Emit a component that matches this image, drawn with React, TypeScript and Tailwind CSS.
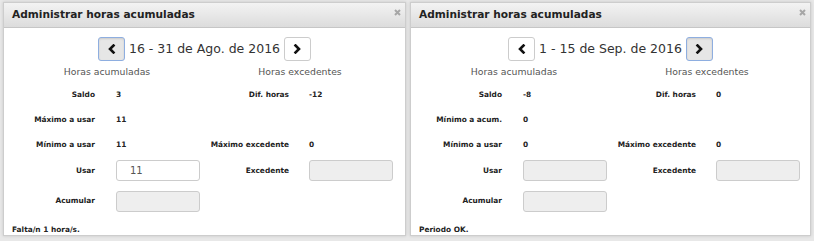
import React from "react";

type Row = { label: string; value?: string; input?: "on" | "off"; inputValue?: string };

type PanelData = {
  period: string;
  active: "prev" | "next";
  left: Row[];
  right: (Row | null)[];
  footer: string;
  width: string;
};

const font = { fontFamily: '"DejaVu Sans", Verdana, sans-serif' };

const Chevron = ({ dir }: { dir: "left" | "right" }) => (
  <svg width="9" height="10" viewBox="0 0 9 10">
    <path
      d={dir === "left" ? "M6.5 1.5 L3 5 L6.5 8.5" : "M2.5 1.5 L6 5 L2.5 8.5"}
      fill="none"
      stroke="#111"
      strokeWidth="2.6"
      strokeLinecap="square"
    />
  </svg>
);

const CloseX = () => (
  <svg width="7" height="7" viewBox="0 0 7 7">
    <path d="M1 1 L6 6 M6 1 L1 6" stroke="#a6a6a6" strokeWidth="2" />
  </svg>
);

const NavButton = ({ dir, active }: { dir: "left" | "right"; active: boolean }) => (
  <button
    className={
      active
        ? "w-[27px] h-[24px] flex items-center justify-center rounded-[3px] border border-[#8eaee0] bg-[#e6e6e6] shadow-[inset_0_1px_2px_rgba(0,0,0,0.12)]"
        : "w-[27px] h-[24px] flex items-center justify-center rounded-[3px] border border-[#cccccc] bg-white"
    }
  >
    <Chevron dir={dir} />
  </button>
);

const Field = ({ row }: { row: Row }) => {
  if (row.input === "on") {
    return (
      <div className="w-[84px] h-[21px] rounded-[3px] border border-[#cccccc] bg-white flex items-center pl-[13px] text-[10px] text-[#555]">
        {row.inputValue}
      </div>
    );
  }
  if (row.input === "off") {
    return <div className="w-[84px] h-[21px] rounded-[3px] border border-[#cccccc] bg-[#eeeeee]" />;
  }
  return <span className="text-[7.4px] font-bold text-[#222]">{row.value}</span>;
};

const rowHeights = ["h-[24px]", "h-[25px]", "h-[25px]", "h-[27px]", "h-[30px] mt-[2px]"];

const Panel = ({ data }: { data: PanelData }) => (
  <div className={`${data.width} h-[234px] bg-white border border-[#cdcdcd] flex flex-col shadow-[0_0_3px_rgba(0,0,0,0.15)]`}>
    <div className="h-[25px] shrink-0 bg-gradient-to-b from-[#f3f3f3] to-[#dcdcdc] border-b border-[#c6c6c6] flex justify-between pl-[8px] pr-[4px]">
      <span className="self-center text-[10.6px] font-bold text-[#222]">Administrar horas acumuladas</span>
      <span className="mt-[6px]">
        <CloseX />
      </span>
    </div>

    <div className="mt-[9px] flex items-center justify-center gap-[4px]">
      <NavButton dir="left" active={data.active === "prev"} />
      <span className="text-[12.5px] text-[#333] leading-none">{data.period}</span>
      <NavButton dir="right" active={data.active === "next"} />
    </div>

    <div className="mt-[5px] flex h-[12px] items-center text-[9.3px] text-[#555]">
      <div className="w-[206px] text-center">Horas acumuladas</div>
      <div className="w-[180px] text-center">Horas excedentes</div>
    </div>

    <div className="mt-[5px] flex flex-col">
      {data.left.map((row, i) => {
        const other = data.right[i];
        return (
          <div key={i} className={`${rowHeights[i]} flex items-center`}>
            <div className="w-[91px] text-right text-[7.4px] font-bold text-[#222]">{row.label}</div>
            <div className="ml-[21px] w-[84px] flex items-center">
              <Field row={row} />
            </div>
            {other && (
              <>
                <div className="w-[89px] text-right text-[7.4px] font-bold text-[#222]">{other.label}</div>
                <div className="ml-[20px] w-[84px] flex items-center">
                  <Field row={other} />
                </div>
              </>
            )}
          </div>
        );
      })}
    </div>

    <div className="mt-[8px] pl-[8px] text-[7.4px] font-bold text-[#222]">{data.footer}</div>
  </div>
);

const panels: PanelData[] = [
  {
    period: "16 - 31 de Ago. de 2016",
    active: "prev",
    width: "w-[403px]",
    left: [
      { label: "Saldo", value: "3" },
      { label: "Máximo a usar", value: "11" },
      { label: "Mínimo a usar", value: "11" },
      { label: "Usar", input: "on", inputValue: "11" },
      { label: "Acumular", input: "off" },
    ],
    right: [
      { label: "Dif. horas", value: "-12" },
      null,
      { label: "Máximo excedente", value: "0" },
      { label: "Excedente", input: "off" },
      null,
    ],
    footer: "Falta/n 1 hora/s.",
  },
  {
    period: "1 - 15 de Sep. de 2016",
    active: "next",
    width: "w-[401px]",
    left: [
      { label: "Saldo", value: "-8" },
      { label: "Mínimo a acum.", value: "0" },
      { label: "Mínimo a usar", value: "0" },
      { label: "Usar", input: "off" },
      { label: "Acumular", input: "off" },
    ],
    right: [
      { label: "Dif. horas", value: "0" },
      null,
      { label: "Máximo excedente", value: "0" },
      { label: "Excedente", input: "off" },
      null,
    ],
    footer: "Periodo OK.",
  },
];

export default function App() {
  return (
    <div style={font} className="w-[814px] h-[241px] bg-[#e8e8e8] flex gap-[4px] pl-[3px] pt-[2px]">
      {panels.map((p, i) => (
        <Panel key={i} data={p} />
      ))}
    </div>
  );
}
